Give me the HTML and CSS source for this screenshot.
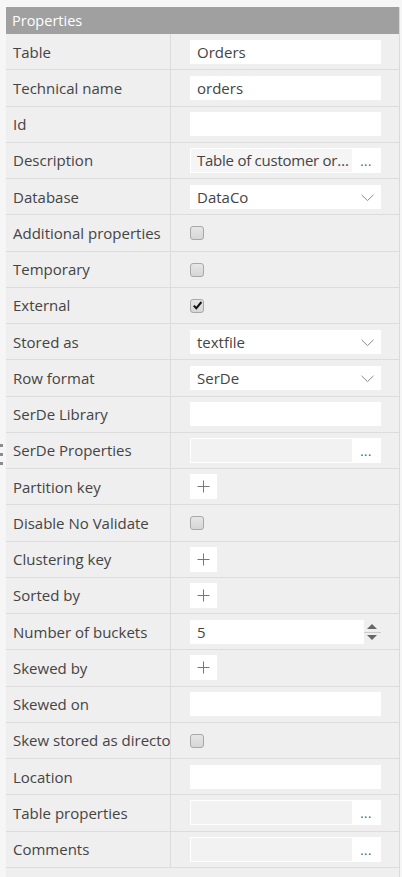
FILE: index.html
```html
<!DOCTYPE html>
<html>
<head>
<meta charset="utf-8">
<link rel="stylesheet" href="styles.css">
</head>
<body>
<div class="page">
  <div class="handle"><span></span><span></span><span></span></div>
  <div class="panel">
    <div class="header">Properties</div>

    <div class="row"><div class="label">Table</div><div class="value"><div class="input">Orders</div></div></div>
    <div class="row"><div class="label">Technical name</div><div class="value"><div class="input">orders</div></div></div>
    <div class="row"><div class="label">Id</div><div class="value"><div class="input"></div></div></div>
    <div class="row"><div class="label">Description</div><div class="value"><div class="dialog"><div class="dialog-text">Table of customer orders placed</div><div class="dots">...</div></div></div></div>
    <div class="row"><div class="label">Database</div><div class="value"><div class="input select">DataCo<svg class="chev" width="13" height="8" viewBox="0 0 13 8"><polyline points="0.5,0.8 6.5,6.6 12.5,0.8" fill="none" stroke="#8a8a8a" stroke-width="1"/></svg></div></div></div>
    <div class="row"><div class="label">Additional properties</div><div class="value"><span class="check"></span></div></div>
    <div class="row"><div class="label">Temporary</div><div class="value"><span class="check"></span></div></div>
    <div class="row"><div class="label">External</div><div class="value"><span class="check checked"><svg width="11" height="11" viewBox="0 0 11 11"><path d="M1.8 5.6 L4.3 8.3 L9.4 2" fill="none" stroke="#111" stroke-width="2"/></svg></span></div></div>
    <div class="row"><div class="label">Stored as</div><div class="value"><div class="input select">textfile<svg class="chev" width="13" height="8" viewBox="0 0 13 8"><polyline points="0.5,0.8 6.5,6.6 12.5,0.8" fill="none" stroke="#8a8a8a" stroke-width="1"/></svg></div></div></div>
    <div class="row"><div class="label">Row format</div><div class="value"><div class="input select">SerDe<svg class="chev" width="13" height="8" viewBox="0 0 13 8"><polyline points="0.5,0.8 6.5,6.6 12.5,0.8" fill="none" stroke="#8a8a8a" stroke-width="1"/></svg></div></div></div>
    <div class="row"><div class="label">SerDe Library</div><div class="value"><div class="input"></div></div></div>
    <div class="row"><div class="label">SerDe Properties</div><div class="value"><div class="dialog"><div class="dialog-text grey"></div><div class="dots">...</div></div></div></div>
    <div class="row"><div class="label">Partition key</div><div class="value"><div class="plus"><svg width="13" height="13" viewBox="0 0 13 13"><path d="M6.5 0.5 V12.5 M0.5 6.5 H12.5" stroke="#777" stroke-width="1"/></svg></div></div></div>
    <div class="row"><div class="label">Disable No Validate</div><div class="value"><span class="check"></span></div></div>
    <div class="row"><div class="label">Clustering key</div><div class="value"><div class="plus"><svg width="13" height="13" viewBox="0 0 13 13"><path d="M6.5 0.5 V12.5 M0.5 6.5 H12.5" stroke="#777" stroke-width="1"/></svg></div></div></div>
    <div class="row"><div class="label">Sorted by</div><div class="value"><div class="plus"><svg width="13" height="13" viewBox="0 0 13 13"><path d="M6.5 0.5 V12.5 M0.5 6.5 H12.5" stroke="#777" stroke-width="1"/></svg></div></div></div>
    <div class="row"><div class="label">Number of buckets</div><div class="value"><div class="number"><div class="num-input">5</div><div class="spinner"><svg width="17" height="24" viewBox="0 0 17 24"><path d="M3 9 L13 9 L8 4 Z" fill="#666"/><path d="M0 12.5 H17" stroke="#ccc" stroke-width="1"/><path d="M3 15 L13 15 L8 20 Z" fill="#666"/></svg></div></div></div></div>
    <div class="row"><div class="label">Skewed by</div><div class="value"><div class="plus"><svg width="13" height="13" viewBox="0 0 13 13"><path d="M6.5 0.5 V12.5 M0.5 6.5 H12.5" stroke="#777" stroke-width="1"/></svg></div></div></div>
    <div class="row"><div class="label">Skewed on</div><div class="value"><div class="input"></div></div></div>
    <div class="row"><div class="label">Skew stored as directories</div><div class="value"><span class="check"></span></div></div>
    <div class="row"><div class="label">Location</div><div class="value"><div class="input"></div></div></div>
    <div class="row"><div class="label">Table properties</div><div class="value"><div class="dialog"><div class="dialog-text grey"></div><div class="dots">...</div></div></div></div>
    <div class="row"><div class="label">Comments</div><div class="value"><div class="dialog"><div class="dialog-text grey"></div><div class="dots">...</div></div></div></div>
    <div class="rest"></div>
  </div>
</div>
</body>
</html>
```
FILE: styles.css
```css
html, body {
  margin: 0;
  padding: 0;
  background: #f6f6f6;
}
body {
  font-family: "Open Sans", "Noto Sans", sans-serif;
  color: #444;
}
.page {
  position: relative;
  width: 402px;
  height: 877px;
  padding-top: 7px;
  box-sizing: border-box;
  overflow: hidden;
}
.handle {
  position: absolute;
  left: 0;
  top: 444px;
  display: flex;
  flex-direction: column;
  gap: 6px;
}
.handle span {
  display: block;
  width: 3px;
  height: 3px;
  background: #8c8c8c;
}
.panel {
  margin-left: 6px;
  width: 394px;
  background: #efefef;
  border-right: 1px solid #dadada;
  box-sizing: border-box;
  height: 870px;
}
.header {
  height: 27px;
  background: #a0a0a0;
  color: #fff;
  font-size: 14.5px;
  line-height: 27px;
  padding-left: 6px;
}
.row {
  display: flex;
  height: 36.26px;
  box-sizing: border-box;
  border-bottom: 1px solid #dcdcdc;
}
.label {
  width: 165px;
  flex: none;
  box-sizing: border-box;
  border-right: 1px solid #dcdcdc;
  padding-left: 7px;
  font-size: 15px;
  white-space: nowrap;
  overflow: hidden;
  display: flex;
  align-items: center;
  color: #444;
}
.value {
  flex: 1;
  display: flex;
  align-items: center;
  padding-left: 19px;
}
.input {
  width: 191px;
  height: 24px;
  background: #fff;
  box-sizing: border-box;
  padding-left: 7px;
  font-size: 15px;
  line-height: 24px;
  color: #444;
  display: flex;
  align-items: center;
}
.select {
  justify-content: space-between;
  padding-right: 7px;
}
.chev {
  display: block;
  margin-top: 2px;
}
.dialog {
  width: 191px;
  height: 25px;
  background: #fff;
  box-sizing: border-box;
  padding: 1px;
  display: flex;
}
.dialog-text {
  width: 161px;
  flex: none;
  background: #f5f5f5;
  font-size: 15px;
  letter-spacing: -0.25px;
  line-height: 23px;
  padding-left: 6px;
  box-sizing: border-box;
  white-space: nowrap;
  overflow: hidden;
  text-overflow: ellipsis;
  color: #444;
}
.dialog-text.grey {
  background: #f2f2f2;
}
.dots {
  flex: 1;
  text-align: center;
  font-size: 13px;
  line-height: 25px;
  color: #555;
  letter-spacing: 0.5px;
}
.check {
  width: 14px;
  height: 14px;
  box-sizing: border-box;
  border: 1px solid #a8a8a8;
  border-radius: 3px;
  background: linear-gradient(#e6e6e6, #d6d6d6);
  display: flex;
  align-items: center;
  justify-content: center;
  margin-top: 1px;
}
.check svg {
  display: block;
}
.plus {
  width: 27px;
  height: 25px;
  background: #fff;
  display: flex;
  align-items: center;
  justify-content: center;
}
.plus svg {
  display: block;
}
.number {
  width: 191px;
  height: 24px;
  display: flex;
}
.num-input {
  width: 174px;
  height: 24px;
  background: #fff;
  box-sizing: border-box;
  padding-left: 7px;
  font-size: 15px;
  line-height: 24px;
  color: #444;
}
.spinner {
  flex: 1;
}
.spinner svg {
  display: block;
}
.rest {
  height: 8px;
}
```
